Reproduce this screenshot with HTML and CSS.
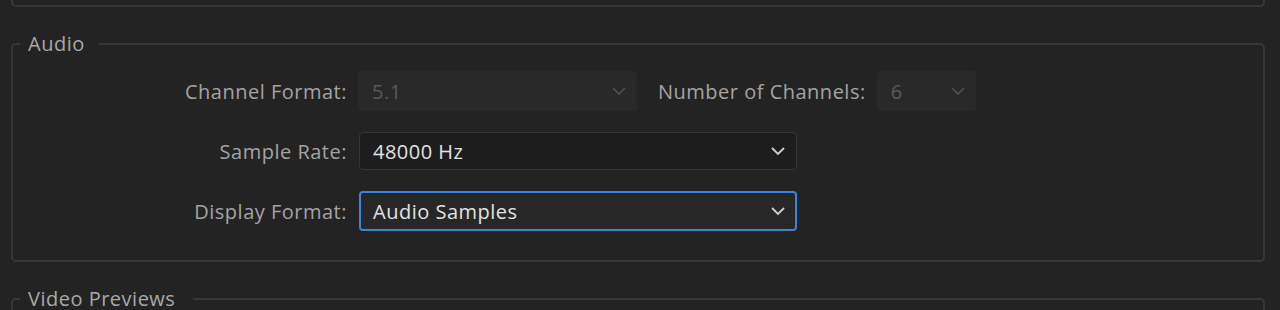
FILE: index.html
```html
<!DOCTYPE html>
<html lang="en">
<head>
<meta charset="utf-8">
<title>Audio Settings</title>
<link rel="stylesheet" href="styles.css">
</head>
<body>
<div class="panel">
  <fieldset class="group group-prev">
    <div class="prev-body"></div>
  </fieldset>

  <fieldset class="group">
    <legend class="legend">Audio</legend>
    <div class="rows">
      <div class="row">
        <label class="label">Channel Format:</label>
        <div class="select select-disabled select-w1">
          <span class="value">5.1</span>
          <svg class="chev" width="14" height="8" viewBox="0 0 14 8"><path d="M1 1 L7 7 L13 1" fill="none" stroke="currentColor" stroke-width="1.6"/></svg>
        </div>
        <label class="label label-inline">Number of Channels:</label>
        <div class="select select-disabled select-w2">
          <span class="value">6</span>
          <svg class="chev" width="14" height="8" viewBox="0 0 14 8"><path d="M1 1 L7 7 L13 1" fill="none" stroke="currentColor" stroke-width="1.6"/></svg>
        </div>
      </div>
      <div class="row">
        <label class="label">Sample Rate:</label>
        <div class="select select-dark select-w3">
          <span class="value">48000 Hz</span>
          <svg class="chev" width="14" height="8" viewBox="0 0 14 8"><path d="M1 1 L7 7 L13 1" fill="none" stroke="currentColor" stroke-width="1.8"/></svg>
        </div>
      </div>
      <div class="row">
        <label class="label">Display Format:</label>
        <div class="select select-focus select-w3">
          <span class="value">Audio Samples</span>
          <svg class="chev" width="14" height="8" viewBox="0 0 14 8"><path d="M1 1 L7 7 L13 1" fill="none" stroke="currentColor" stroke-width="1.8"/></svg>
        </div>
      </div>
    </div>
  </fieldset>

  <fieldset class="group">
    <legend class="legend legend-wide">Video Previews</legend>
    <div class="rows"></div>
  </fieldset>
</div>
</body>
</html>
```

FILE: styles.css
```css
html, body {
  margin: 0;
  padding: 0;
  background: #232323;
  height: 100%;
  overflow: hidden;
}

body {
  font-family: "Open Sans", "Noto Sans", sans-serif;
  font-size: 20px;
  letter-spacing: 0.5px;
  color: #a8a8a8;
}

.panel {
  display: flex;
  flex-direction: column;
  gap: 26px;
  padding: 0 15px 0 11px;
  margin-top: -40px;
}

.group {
  margin: 0;
  padding: 16px 0 29px 7px;
  border: 2px solid #373737;
  border-radius: 5px;
  min-width: 0;
}

.group-prev {
  padding: 0;
}

.prev-body {
  height: 43px;
}

.legend {
  padding: 0 14px 0 8px;
  line-height: 22px;
  color: #a8a8a8;
}

.legend-wide {
  padding-right: 18px;
}

.rows {
  display: flex;
  flex-direction: column;
  gap: 21px;
}

.row {
  display: flex;
  align-items: center;
}

.label {
  width: 327px;
  text-align: right;
  flex: none;
  margin-right: 11px;
  white-space: nowrap;
  color: #a3a3a3;
}

.label-inline {
  width: auto;
  margin-left: 21px;
  margin-right: 11px;
}

.select {
  box-sizing: border-box;
  height: 40px;
  display: flex;
  align-items: center;
  justify-content: space-between;
  padding: 0 11px 0 14px;
  border-radius: 4px;
  flex: none;
}

.select-w1 { width: 279px; }
.select-w2 { width: 99px; }
.select-w3 { width: 438px; margin-left: 1px; height: 38px; }

.select-disabled {
  background: #292929;
  color: #595959;
}

.select-disabled .chev {
  color: #505050;
}

.select-dark {
  background: #1d1d1d;
  border: 1px solid #363636;
  color: #e2e2e2;
  padding-left: 13px;
}

.select-dark .chev,
.select-focus .chev {
  color: #cfcfcf;
}

.select-focus {
  height: 40px;
  background: #272727;
  border: 2px solid #3b84d8;
  color: #e2e2e2;
  padding-left: 12px;
  padding-right: 10px;
}

.value {
  white-space: nowrap;
}
```
